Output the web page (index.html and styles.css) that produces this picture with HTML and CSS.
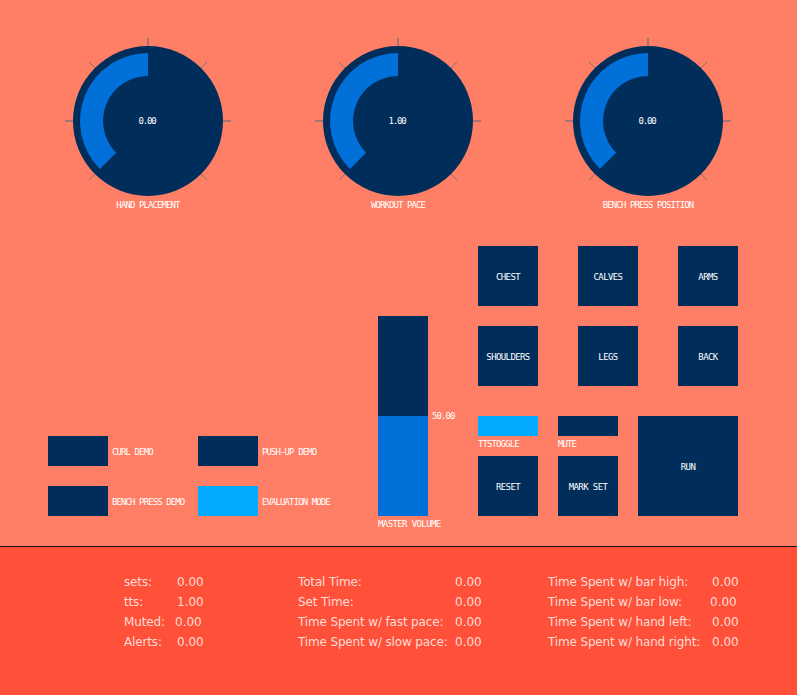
FILE: index.html
```html
<!DOCTYPE html>
<html lang="en">
<head>
    <meta charset="UTF-8">
    <meta name="viewport" content="width=device-width, initial-scale=1.0">
    <title>Workout Trainer</title>
    <link rel="stylesheet" href="styles.css">
</head>
<body>

    <div class="controlPanel">

        <!-- Knobs -->
        <div class="knobRow">
            <div class="knob">
                <svg class="knobDial" width="166" height="160" viewBox="0 0 166 160">
                    <defs>
                        <g id="knobFace">
                            <g class="knobTicks">
                                <line x1="83" y1="0" x2="83" y2="8"/>
                                <line x1="0" y1="83" x2="8" y2="83"/>
                                <line x1="158" y1="83" x2="166" y2="83"/>
                            </g>
                            <g class="knobTicks knobTicksSide">
                                <line x1="24" y1="24" x2="30" y2="30"/>
                                <line x1="142" y1="24" x2="136" y2="30"/>
                                <line x1="24" y1="142" x2="30" y2="136"/>
                                <line x1="142" y1="142" x2="136" y2="136"/>
                            </g>
                            <circle class="knobBase" cx="83" cy="83" r="75"/>
                            <path class="knobArc" d="M83 15A68 68 0 0 0 34.9 131.1L51.2 114.8A45 45 0 0 1 83 38Z"/>
                        </g>
                    </defs>
                    <use href="#knobFace"/>
                    <text class="knobValue" x="82" y="86">0.00</text>
                </svg>
                <div class="label">HAND PLACEMENT</div>
            </div>
            <div class="knob">
                <svg class="knobDial" width="166" height="160" viewBox="0 0 166 160">
                    <use href="#knobFace"/>
                    <text class="knobValue" x="82" y="86">1.00</text>
                </svg>
                <div class="label">WORKOUT PACE</div>
            </div>
            <div class="knob">
                <svg class="knobDial" width="166" height="160" viewBox="0 0 166 160">
                    <use href="#knobFace"/>
                    <text class="knobValue" x="82" y="86">0.00</text>
                </svg>
                <div class="label">BENCH PRESS POSITION</div>
            </div>
        </div>

        <div class="controls">

            <!-- Demo toggles -->
            <div class="demoGrid">
                <div class="demoItem">
                    <div class="toggle"></div>
                    <div class="label">CURL DEMO</div>
                </div>
                <div class="demoItem">
                    <div class="toggle"></div>
                    <div class="label">PUSH-UP DEMO</div>
                </div>
                <div class="demoItem">
                    <div class="toggle"></div>
                    <div class="label">BENCH PRESS DEMO</div>
                </div>
                <div class="demoItem">
                    <div class="toggle active"></div>
                    <div class="label">EVALUATION MODE</div>
                </div>
            </div>

            <!-- Master volume -->
            <div class="volume">
                <div class="volumeTop">
                    <div class="volumeBar">
                        <div class="volumeFill"></div>
                    </div>
                    <div class="label volumeValue">50.00</div>
                </div>
                <div class="label volumeLabel">MASTER VOLUME</div>
            </div>

            <div class="buttons">
                <div class="muscleGrid">
                    <div class="button">CHEST</div>
                    <div class="button">CALVES</div>
                    <div class="button">ARMS</div>
                    <div class="button">SHOULDERS</div>
                    <div class="button">LEGS</div>
                    <div class="button">BACK</div>
                </div>
                <div class="actionRow">
                    <div class="actionColumn">
                        <div class="smallToggle active"></div>
                        <div class="label smallLabel">TTSTOGGLE</div>
                        <div class="button">RESET</div>
                    </div>
                    <div class="actionColumn">
                        <div class="smallToggle"></div>
                        <div class="label smallLabel">MUTE</div>
                        <div class="button">MARK SET</div>
                    </div>
                    <div class="button runButton">RUN</div>
                </div>
            </div>

        </div>
    </div>

    <!-- Stats -->
    <div class="statsPanel">
        <div class="statsColumn statsSmall">
            <div class="statsRow"><span>sets:</span><span class="statsValue">0.00</span></div>
            <div class="statsRow"><span>tts:</span><span class="statsValue">1.00</span></div>
            <div class="statsRow"><span>Muted:</span><span class="statsValue nudgeLeft">0.00</span></div>
            <div class="statsRow"><span>Alerts:</span><span class="statsValue">0.00</span></div>
        </div>
        <div class="statsColumn statsMedium">
            <div class="statsRow"><span>Total Time:</span><span class="statsValue">0.00</span></div>
            <div class="statsRow"><span>Set Time:</span><span class="statsValue">0.00</span></div>
            <div class="statsRow"><span>Time Spent w/ fast pace:</span><span class="statsValue">0.00</span></div>
            <div class="statsRow"><span>Time Spent w/ slow pace:</span><span class="statsValue">0.00</span></div>
        </div>
        <div class="statsColumn statsLarge">
            <div class="statsRow"><span>Time Spent w/ bar high:</span><span class="statsValue">0.00</span></div>
            <div class="statsRow"><span>Time Spent w/ bar low:</span><span class="statsValue nudgeLeft">0.00</span></div>
            <div class="statsRow"><span>Time Spent w/ hand left:</span><span class="statsValue">0.00</span></div>
            <div class="statsRow"><span>Time Spent w/ hand right:</span><span class="statsValue">0.00</span></div>
        </div>
    </div>

</body>
</html>
```

FILE: styles.css
```css
body {
    margin: 0;
    background-color: #ff7f66;
    font-family: 'DejaVu Sans Mono', monospace;
    overflow: hidden;
}

.controlPanel {
    height: 546px;
    border-bottom: 1px solid #1a0a08;
}

.label {
    padding-top: 2px;
    font-size: 9px;
    letter-spacing: -0.9px;
    line-height: 10px;
    color: #fff;
    white-space: nowrap;
}

/* Knobs */
.knobRow {
    display: flex;
    gap: 84px;
    padding: 38px 0 0 65px;
}

.knob {
    width: 166px;
    text-align: center;
}

.knobDial {
    display: block;
}

.knobTicks line {
    stroke: #4f6a85;
    stroke-width: 1;
}

.knobTicksSide line {
    stroke-opacity: 0.7;
}

.knobBase {
    fill: #002d5a;
}

.knobArc {
    fill: #0170d8;
}

.knobValue {
    fill: #fff;
    font-size: 9px;
    letter-spacing: -1.2px;
    text-anchor: middle;
}

/* Lower controls */
.controls {
    display: flex;
    margin-top: 36px;
    padding-left: 48px;
}

.demoGrid {
    display: grid;
    grid-template-columns: 150px 150px;
    grid-auto-rows: 30px;
    row-gap: 20px;
    width: 330px;
    margin-top: 190px;
}

.demoItem {
    display: flex;
    align-items: center;
    gap: 4px;
}

.toggle {
    width: 60px;
    height: 30px;
    background-color: #002d5a;
}

.toggle.active,
.smallToggle.active {
    background-color: #00aaff;
}

/* Master volume */
.volume {
    width: 100px;
    margin-top: 70px;
}

.volumeTop {
    display: flex;
    gap: 4px;
}

.volumeBar {
    display: flex;
    align-items: flex-end;
    width: 50px;
    height: 200px;
    background-color: #002d5a;
}

.volumeFill {
    width: 100%;
    height: 100px;
    background-color: #0170d8;
}

.volumeValue {
    padding-top: 95px;
}

.volumeLabel {
    margin-top: 1px;
    letter-spacing: -0.6px;
}

/* Buttons */
.button {
    display: flex;
    align-items: center;
    justify-content: center;
    width: 60px;
    height: 60px;
    padding-top: 2px;
    box-sizing: border-box;
    background-color: #002d5a;
    color: #fff;
    font-size: 9px;
    letter-spacing: -0.6px;
    white-space: nowrap;
}

.muscleGrid {
    display: grid;
    grid-template-columns: repeat(3, 60px);
    column-gap: 40px;
    row-gap: 20px;
}

.actionRow {
    display: flex;
    gap: 20px;
    margin-top: 30px;
}

.smallToggle {
    width: 60px;
    height: 20px;
    background-color: #002d5a;
}

.smallLabel {
    height: 20px;
    padding-top: 3px;
    box-sizing: border-box;
}

.runButton {
    width: 100px;
    height: 100px;
}

/* Stats */
.statsPanel {
    display: flex;
    height: 148px;
    padding: 25px 0 0 124px;
    box-sizing: border-box;
    background-color: #ff5039;
    font-family: 'DejaVu Sans', sans-serif;
    font-size: 12px;
    letter-spacing: -0.15px;
    color: #ffdcd4;
}

.statsRow {
    display: flex;
    justify-content: space-between;
    height: 20px;
    line-height: 20px;
    white-space: nowrap;
}

.statsSmall {
    width: 80px;
    margin-right: 94px;
}

.statsMedium {
    width: 184px;
    margin-right: 66px;
}

.statsLarge {
    width: 191px;
}

.statsValue {
    width: 27px;
    letter-spacing: 0;
}

.nudgeLeft {
    margin-right: 2px;
}
```
